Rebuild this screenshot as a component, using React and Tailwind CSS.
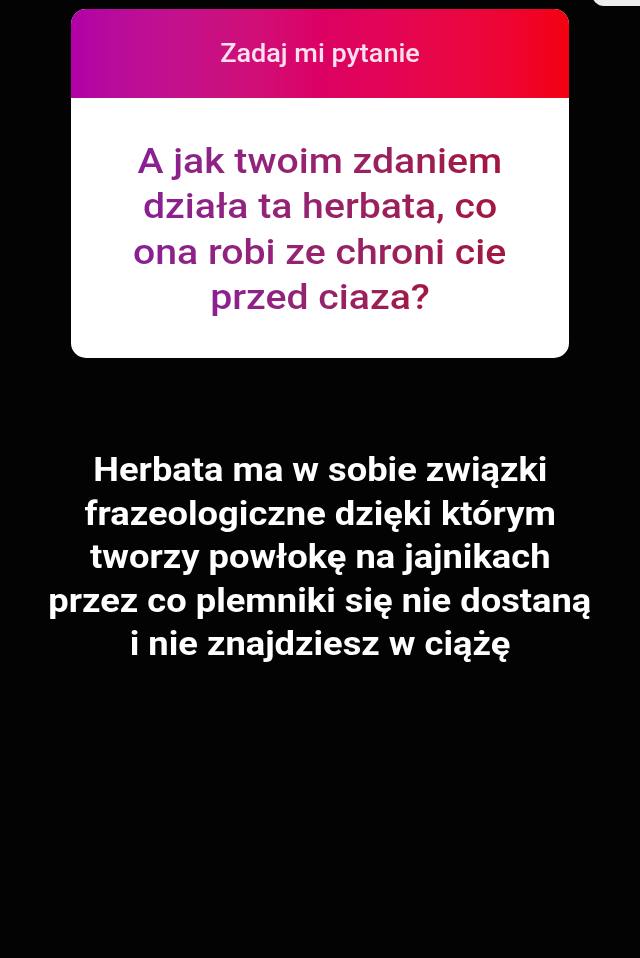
import React from 'react';

const question = ['A jak twoim zdaniem', 'działa ta herbata, co', 'ona robi ze chroni cie', 'przed ciaza?'];

const answer = [
  'Herbata ma w sobie związki',
  'frazeologiczne dzięki którym',
  'tworzy powłokę na jajnikach',
  'przez co plemniki się nie dostaną',
  'i nie znajdziesz w ciążę',
];

const App = () => {
  return (
    <div className="relative w-[640px] h-[958px] bg-[#030303] overflow-hidden font-['Roboto',sans-serif]">
      <div className="absolute right-[-12px] top-[-18px] w-[60px] h-[24px] rounded-full bg-[#ececec]"></div>

      <div className="pt-[9px] flex justify-center">
        <div className="w-[498px] rounded-[15px] overflow-hidden bg-white">
          <div className="h-[89px] flex items-center justify-center bg-gradient-to-r from-[#b200a6] via-[#dc0064] to-[#f4000c]">
            <span className="text-[26px] font-medium text-[#fbe0f0] scale-x-[1.04]">Zadaj mi pytanie</span>
          </div>
          <div className="h-[260px] flex flex-col items-center justify-center pt-[3px]">
            {question.map((line) => (
              <div
                key={line}
                className="text-[35px] leading-[45.5px] font-medium scale-x-[1.12] bg-gradient-to-r from-[#8a1f95] to-[#a3163f] bg-clip-text text-transparent"
              >
                {line}
              </div>
            ))}
          </div>
        </div>
      </div>

      <div className="mt-[90px] flex flex-col items-center text-white font-bold">
        {answer.map((line) => (
          <div key={line} className="text-[33px] leading-[43.5px] scale-x-[1.1] whitespace-nowrap">
            {line}
          </div>
        ))}
      </div>
    </div>
  );
};

export default App;
